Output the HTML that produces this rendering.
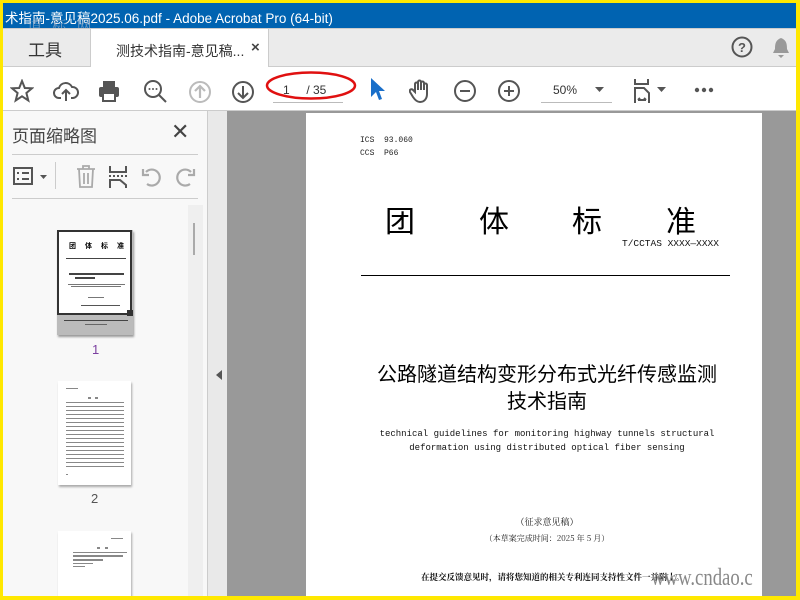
<!DOCTYPE html>
<html><head><meta charset="utf-8"><style>
*{margin:0;padding:0;box-sizing:border-box}
body{width:800px;height:600px;overflow:hidden;background:#ffe800;position:relative;font-family:"Liberation Sans","Noto Sans CJK SC",sans-serif}
.a{position:absolute}
.ico{stroke:#555;fill:none;stroke-width:2}
.t{font-family:"Liberation Sans","Noto Sans CJK SC",sans-serif;white-space:nowrap}
.line{position:absolute;height:2px;background:#000}
.g{position:absolute;height:1px;background:#444}
</style></head><body>
<div class="a" style="left:3px;top:3px;width:793px;height:593px;background:#fff;overflow:hidden">
<div class="a" style="left:0;top:0;width:793px;height:25px;background:#0063b1"></div>
<div class="a t" style="left:2px;top:4px;color:#fff;font-size:13.5px">术指南-意见稿2025.06.pdf - Adobe Acrobat Pro (64-bit)</div>
<div class="a t" style="left:24px;top:12px;color:#8aa6c4;font-size:15px;letter-spacing:3px;font-family:'Noto Serif CJK SC',serif;opacity:.8">道 标 网</div>
<div class="a" style="left:0;top:25px;width:793px;height:39px;background:#ebebeb;border-top:1px solid #ccc;border-bottom:1px solid #ccc"></div>
<div class="a" style="left:87px;top:26px;width:179px;height:38px;background:#fff;border-left:1px solid #ccc;border-right:1px solid #ccc"></div>
<div class="a t" style="left:25px;top:33px;font-size:17px;color:#333">工具</div>
<div class="a t" style="left:113px;top:38px;font-size:14px;color:#333">测技术指南-意见稿...</div>
<div class="a t" style="left:248px;top:36px;font-size:15px;color:#444;font-weight:bold">×</div>
<svg class="a" style="left:728px;top:33px" width="22" height="22"><circle cx="11" cy="11" r="9.5" class="ico"/><text x="11" y="16" font-size="13" text-anchor="middle" fill="#555" font-family="Liberation Sans" font-weight="bold">?</text></svg>
<svg class="a" style="left:768px;top:34px" width="20" height="22"><path d="M10 1 C5 3 4 6 4 12 L2 16 H18 L16 12 C16 6 15 3 10 1Z M7 18 H13 L10 21Z" fill="#999"/></svg>
<svg class="a" style="left:7px;top:76px" width="24" height="24"><path d="M12 2 L14.8 9 L22 9.3 L16.4 14 L18.3 21.5 L12 17.3 L5.7 21.5 L7.6 14 L2 9.3 L9.2 9Z" class="ico" stroke-width="1.8"/></svg>
<svg class="a" style="left:50px;top:77px" width="26" height="24"><path d="M8 18 H6 A5 5 0 0 1 6 8 A7 7 0 0 1 19 7 A5 5 0 0 1 20 18 H18" class="ico" stroke-width="2.2"/><path d="M13 21 V11 M9 14 L13 10 L17 14" class="ico" stroke-width="2.2"/></svg>
<svg class="a" style="left:94px;top:76px" width="24" height="24"><rect x="6" y="2" width="12" height="6" fill="#555"/><rect x="2" y="8" width="20" height="10" rx="2" fill="#555"/><rect x="6" y="14" width="12" height="8" fill="#fff" stroke="#555" stroke-width="2"/></svg>
<svg class="a" style="left:140px;top:76px" width="26" height="26"><circle cx="10" cy="10" r="8" class="ico" stroke-width="2.2"/><path d="M16 16 L23 23" class="ico" stroke-width="3"/><circle cx="6.5" cy="10" r="1" fill="#555"/><circle cx="10" cy="10" r="1" fill="#555"/><circle cx="13.5" cy="10" r="1" fill="#555"/></svg>
<svg class="a" style="left:185px;top:77px" width="24" height="24"><circle cx="12" cy="12" r="10" stroke="#bbb" fill="none" stroke-width="2"/><path d="M12 18 V6 M7 11 L12 6 L17 11" stroke="#bbb" fill="none" stroke-width="2.2"/></svg>
<svg class="a" style="left:228px;top:77px" width="24" height="24"><circle cx="12" cy="12" r="10" class="ico"/><path d="M12 6 V18 M7 13 L12 18 L17 13" class="ico" stroke-width="2.2"/></svg>
<div class="a t" style="left:280px;top:80px;font-size:12px;color:#333">1&nbsp;&nbsp;&nbsp;&nbsp;&nbsp;/ 35</div>
<div class="a" style="left:270px;top:99px;width:70px;height:1px;background:#bbb"></div>
<svg class="a" style="left:262px;top:67px" width="96" height="32"><ellipse cx="46" cy="15.5" rx="44" ry="13" fill="none" stroke="#e01010" stroke-width="2.5"/></svg>
<svg class="a" style="left:366px;top:74px" width="16" height="26"><path d="M2 1 L2 20 L7 15 L10 23 L13 22 L10 14 L16 14Z" fill="#1a6fc9"/></svg>
<svg class="a" style="left:406px;top:75px" width="24" height="26"><path d="M6 14 V6 A1.5 1.5 0 0 1 9 6 V12 V4 A1.5 1.5 0 0 1 12 4 V12 V5 A1.5 1.5 0 0 1 15 5 V12 V7 A1.5 1.5 0 0 1 18 7 V16 C18 21 15 24 11 24 C8 24 6 22 4 19 L1 14 A1.5 1.5 0 0 1 4 12Z" class="ico" stroke-width="1.6"/></svg>
<svg class="a" style="left:450px;top:76px" width="24" height="24"><circle cx="12" cy="12" r="10" class="ico"/><path d="M7 12 H17" class="ico"/></svg>
<svg class="a" style="left:494px;top:76px" width="24" height="24"><circle cx="12" cy="12" r="10" class="ico"/><path d="M7 12 H17 M12 7 V17" class="ico"/></svg>
<div class="a t" style="left:550px;top:80px;font-size:12px;color:#333">50%</div>
<div class="a" style="left:538px;top:99px;width:71px;height:1px;background:#bbb"></div>
<svg class="a" style="left:592px;top:84px" width="10" height="6"><path d="M0 0 H9 L4.5 5Z" fill="#555"/></svg>
<svg class="a" style="left:630px;top:75px" width="22" height="26"><path d="M2 1 V6 H15 V1" class="ico" stroke-width="2"/><path d="M2 25 V10 H11 L16 15 V25" class="ico" stroke-width="2"/><path d="M5 22 H13 M5 22 L7 20 M13 22 L11 20" class="ico" stroke-width="1.2"/></svg>
<svg class="a" style="left:654px;top:84px" width="10" height="6"><path d="M0 0 H9 L4.5 5Z" fill="#555"/></svg>
<svg class="a" style="left:690px;top:84px" width="24" height="6"><circle cx="4" cy="3" r="2.2" fill="#555"/><circle cx="11" cy="3" r="2.2" fill="#555"/><circle cx="18" cy="3" r="2.2" fill="#555"/></svg>
<div class="a" style="left:0;top:107px;width:793px;height:1px;background:#ccc"></div>
<div class="a" style="left:0;top:108px;width:204px;height:485px;background:#f8f8f8"></div>
<div class="a t" style="left:9px;top:119px;font-size:17px;color:#444">页面缩略图</div>
<div class="a t" style="left:168px;top:116px;font-size:22px;color:#444">✕</div>
<div class="a" style="left:9px;top:151px;width:186px;height:1px;background:#ccc"></div>
<svg class="a" style="left:9px;top:162px" width="36" height="22"><rect x="2" y="3" width="18" height="16" class="ico" stroke-width="1.8"/><path d="M5 8 H7 M10 8 H17 M5 14 H7 M10 14 H17" class="ico" stroke-width="2"/><path d="M28 10 H35 L31.5 14Z" fill="#555"/></svg>
<div class="a" style="left:52px;top:159px;width:1px;height:27px;background:#ccc"></div>
<svg class="a" style="left:72px;top:162px" width="22" height="24"><path d="M2 4 H20 M8 4 V1 H14 V4 M4 4 L5 22 H17 L18 4 M9 8 V19 M13 8 V19" stroke="#aaa" fill="none" stroke-width="1.8"/></svg>
<svg class="a" style="left:104px;top:162px" width="22" height="24"><path d="M3 1 V7 H19 V1 M3 23 V15 H13 L19 20 V23" stroke="#555" fill="none" stroke-width="2"/><path d="M2 11 H20" stroke="#555" stroke-dasharray="2 2" stroke-width="2"/></svg>
<svg class="a" style="left:138px;top:163px" width="22" height="22"><path d="M6 18 A8 8 0 1 0 5 6 M2 3 V9 H8" stroke="#aaa" fill="none" stroke-width="2.2"/></svg>
<svg class="a" style="left:171px;top:163px" width="22" height="22"><path d="M16 18 A8 8 0 1 1 17 6 M20 3 V9 H14" stroke="#aaa" fill="none" stroke-width="2.2"/></svg>
<div class="a" style="left:9px;top:195px;width:186px;height:1px;background:#ccc"></div>
<div class="a" style="left:185px;top:202px;width:15px;height:391px;background:#efefef"></div>
<div class="a" style="left:190px;top:220px;width:2px;height:32px;background:#aaa"></div>
<div class="a" style="left:54px;top:227px;width:76px;height:105px;background:#bbb;box-shadow:1px 2px 2px #999"></div>
<div class="a" style="left:54px;top:227px;width:75px;height:85px;background:#fff;border:2px solid #333"></div>
<div class="a" style="left:124px;top:307px;width:6px;height:6px;background:#333"></div>
<div class="a t" style="left:66px;top:238px;font-size:7px;font-weight:bold;letter-spacing:9px">团体标准</div>
<div class="g" style="left:63px;top:255px;width:60px"></div>
<div class="g" style="left:66px;top:270px;width:55px;height:2px"></div>
<div class="g" style="left:72px;top:274px;width:20px;height:2px"></div>
<div class="g" style="left:65px;top:281px;width:57px;background:#777"></div>
<div class="g" style="left:68px;top:283px;width:50px;background:#777"></div>
<div class="g" style="left:85px;top:294px;width:16px;background:#777"></div>
<div class="g" style="left:78px;top:302px;width:39px;background:#555"></div>
<div class="g" style="left:61px;top:317px;width:64px"></div>
<div class="g" style="left:82px;top:321px;width:22px;background:#666"></div>
<div class="a t" style="left:89px;top:339px;font-size:13px;color:#7b3fa0">1</div>
<div class="a" style="left:55px;top:378px;width:73px;height:104px;background:#fff;box-shadow:1px 2px 2px #aaa"></div>
<svg class="a" style="left:60px;top:385px" width="64" height="90"><g fill="#888"><rect x="3" y="0" width="12" height="1"/><rect x="25" y="9" width="3" height="2"/><rect x="32" y="9" width="3" height="2"/>
<rect x="3" y="14" width="58" height="1"/><rect x="3" y="18" width="58" height="1"/><rect x="3" y="22" width="58" height="1"/><rect x="3" y="26" width="58" height="1"/><rect x="3" y="30" width="58" height="1"/><rect x="3" y="34" width="58" height="1"/><rect x="3" y="38" width="58" height="1"/><rect x="3" y="42" width="58" height="1"/><rect x="3" y="46" width="58" height="1"/><rect x="3" y="50" width="58" height="1"/><rect x="3" y="54" width="58" height="1"/><rect x="3" y="58" width="58" height="1"/><rect x="3" y="62" width="58" height="1"/><rect x="3" y="66" width="58" height="1"/><rect x="3" y="70" width="58" height="1"/><rect x="3" y="74" width="58" height="1"/><rect x="3" y="78" width="58" height="1"/><rect x="3" y="86" width="2" height="1"/></g></svg>
<div class="a t" style="left:88px;top:488px;font-size:13px;color:#555">2</div>
<div class="a" style="left:55px;top:528px;width:73px;height:70px;background:#fff;box-shadow:1px 2px 2px #aaa"></div>
<svg class="a" style="left:60px;top:535px" width="64" height="30"><g fill="#888"><rect x="48" y="0" width="12" height="1"/><rect x="34" y="9" width="3" height="2"/><rect x="42" y="9" width="3" height="2"/><rect x="10" y="14" width="54" height="1"/><rect x="10" y="17" width="50" height="2"/><rect x="10" y="21" width="30" height="2"/><rect x="10" y="25" width="20" height="1"/><rect x="10" y="28" width="12" height="1"/></g></svg>
<div class="a" style="left:204px;top:108px;width:20px;height:485px;background:#e9e9e9;border-left:1px solid #ccc"></div>
<svg class="a" style="left:213px;top:367px" width="6" height="10"><path d="M6 0 V10 L0 5Z" fill="#555"/></svg>
<div class="a" style="left:224px;top:108px;width:569px;height:485px;background:#999"></div>
<div class="a" style="left:303px;top:110px;width:456px;height:483px;background:#fff"></div>
<div class="a" style="left:357px;top:131px;font-family:'Liberation Mono','Noto Sans CJK SC',monospace;font-size:8px;line-height:13px;color:#222">ICS&nbsp;&nbsp;93.060<br>CCS&nbsp;&nbsp;P66</div>
<div class="a t" style="left:382px;top:194px;font-size:30px;color:#000;font-family:'Noto Sans CJK SC',sans-serif">团</div>
<div class="a t" style="left:476px;top:194px;font-size:30px;color:#000;font-family:'Noto Sans CJK SC',sans-serif">体</div>
<div class="a t" style="left:569px;top:194px;font-size:30px;color:#000;font-family:'Noto Sans CJK SC',sans-serif">标</div>
<div class="a t" style="left:663px;top:194px;font-size:30px;color:#000;font-family:'Noto Sans CJK SC',sans-serif">准</div>
<div class="a" style="left:619px;top:235px;font-family:'Liberation Mono',monospace;font-size:9.5px;color:#111;white-space:nowrap">T/CCTAS XXXX—XXXX</div>
<div class="line" style="left:358px;top:272px;width:369px;height:1px;background:#000"></div>
<div class="a t" style="left:303px;top:356px;width:482px;text-align:center;font-size:20px;line-height:27px;color:#000;font-family:'Noto Sans CJK SC',sans-serif">公路隧道结构变形分布式光纤传感监测<br>技术指南</div>
<div class="a" style="left:303px;top:424px;width:482px;text-align:center;font-family:'Liberation Mono',monospace;font-size:9px;line-height:14px;color:#111">technical guidelines for monitoring highway tunnels structural<br>deformation using distributed optical fiber sensing</div>
<div class="a t" style="left:303px;top:512px;width:482px;text-align:center;font-size:9px;color:#222;font-family:'Noto Serif CJK SC',serif">（征求意见稿）</div>
<div class="a t" style="left:303px;top:530px;width:482px;text-align:center;font-size:8px;color:#222;font-family:'Noto Serif CJK SC',serif">（本草案完成时间：2025 年 5 月）</div>
<div class="a t" style="left:418px;top:568px;font-size:8.5px;color:#111;font-weight:bold;font-family:'Noto Serif CJK SC',serif">在提交反馈意见时，请将您知道的相关专利连同支持性文件一并附上。</div>
<div class="a t" style="left:648px;top:562px;font-size:24px;color:#888;font-family:'Liberation Serif',serif;transform:scaleX(.78);transform-origin:left">www.cndao.c</div>
</div>
</body></html>
